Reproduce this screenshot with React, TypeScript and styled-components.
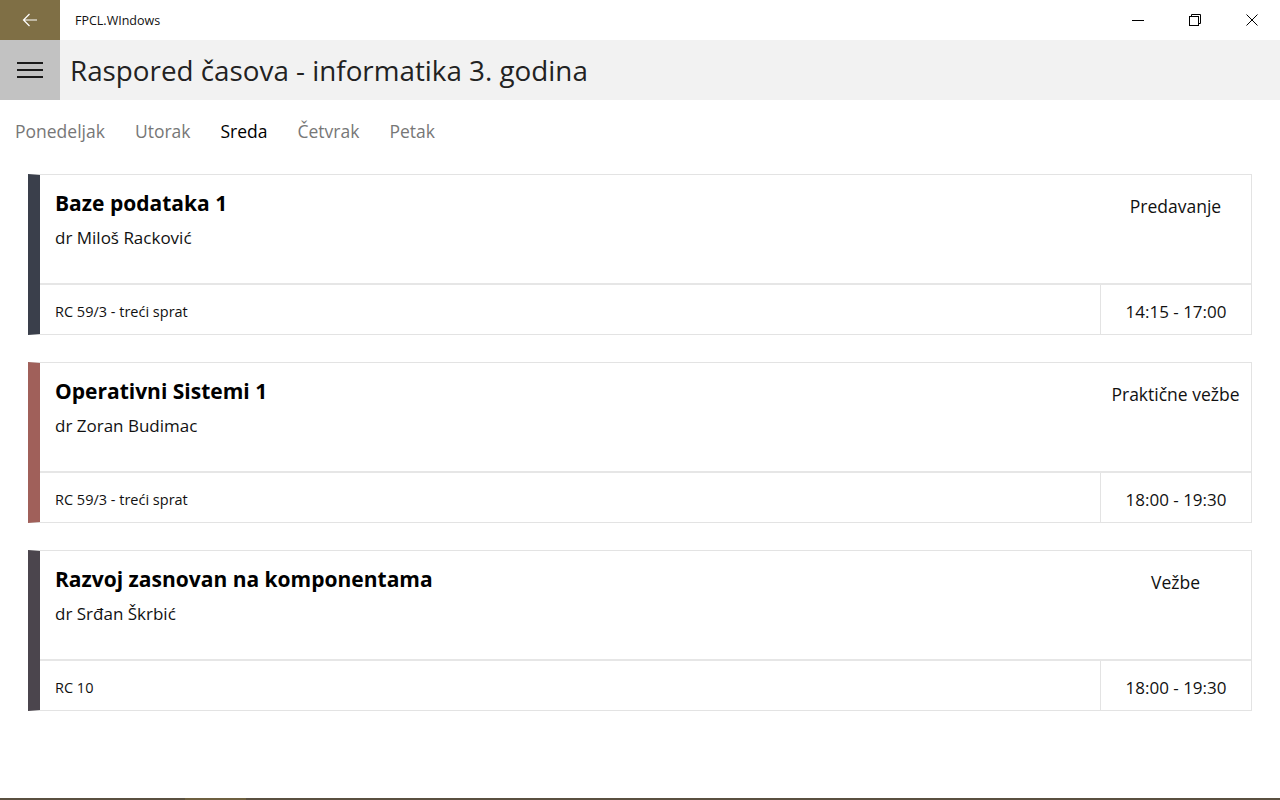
import React from 'react';
import styled, { createGlobalStyle } from 'styled-components';

const GlobalStyle = createGlobalStyle`
  html, body {
    margin: 0;
    padding: 0;
    background: #ffffff;
    font-family: "Open Sans", "Noto Sans", sans-serif;
  }
  * { box-sizing: border-box; }
`;

const Page = styled.div`
  width: 1280px;
  height: 800px;
  display: flex;
  flex-direction: column;
  background: #ffffff;
  overflow: hidden;
`;

const TitleBar = styled.div`
  height: 40px;
  display: flex;
  align-items: center;
`;

const BackButton = styled.div`
  width: 60px;
  height: 40px;
  background: #7f6f45;
  display: flex;
  align-items: center;
  justify-content: center;
`;

const AppName = styled.div`
  flex: 1;
  padding-left: 15px;
  font-size: 12.5px;
  color: #111;
`;

const CaptionButton = styled.div`
  width: 57px;
  height: 40px;
  display: flex;
  align-items: center;
  justify-content: center;
`;

const Header = styled.div`
  height: 60px;
  background: #f2f2f2;
  display: flex;
  align-items: center;
`;

const MenuButton = styled.div`
  width: 60px;
  height: 60px;
  background: #c2c2c2;
  display: flex;
  align-items: center;
  justify-content: center;
`;

const PageTitle = styled.h1`
  margin: 0 0 0 10px;
  font-size: 27.8px;
  font-weight: 400;
  color: #222;
`;

const Pivot = styled.div`
  display: flex;
  gap: 30px;
  padding: 18px 15px 0;
  height: 62px;
`;

const PivotItem = styled.div<{ $active?: boolean }>`
  font-size: 17.5px;
  color: ${p => (p.$active ? '#000' : '#777')};
  line-height: 26px;
`;

const List = styled.div`
  display: flex;
  flex-direction: column;
  gap: 27px;
  padding: 12px 28px 0;
`;

const Card = styled.div<{ $accent: string }>`
  display: flex;
  height: 161px;
  border: 1px solid #e3e3e3;
  border-left: 12px solid ${p => p.$accent};
`;

const CardBody = styled.div`
  flex: 1;
  display: flex;
  flex-direction: column;
`;

const Top = styled.div`
  height: 110px;
  display: flex;
  border-bottom: 2px solid #e6e6e6;
`;

const Info = styled.div`
  flex: 1;
  padding: 13px 0 0 15px;
`;

const Subject = styled.div`
  font-size: 21px;
  font-weight: 700;
  color: #000;
  line-height: 30px;
`;

const Lecturer = styled.div`
  font-size: 17px;
  color: #111;
  margin-top: 8px;
`;

const Kind = styled.div`
  width: 151px;
  text-align: center;
  padding-top: 19px;
  font-size: 17.5px;
  color: #111;
`;

const Bottom = styled.div`
  flex: 1;
  display: flex;
  align-items: center;
`;

const Room = styled.div`
  flex: 1;
  padding: 3px 0 0 15px;
  font-size: 14.5px;
  color: #111;
`;

const Time = styled.div`
  width: 151px;
  height: 100%;
  padding-top: 3px;
  border-left: 1px solid #e3e3e3;
  display: flex;
  align-items: center;
  justify-content: center;
  font-size: 17px;
  color: #111;
`;

const Spacer = styled.div`
  flex: 1;
`;

const Taskbar = styled.div`
  height: 2px;
  background: linear-gradient(to right, #5a5040 0 185px, #6e6040 185px 246px, #5a5040 246px);
`;

const classes = [
  {
    accent: '#3a3f4b',
    subject: 'Baze podataka 1',
    lecturer: 'dr Miloš Racković',
    kind: 'Predavanje',
    room: 'RC 59/3 - treći sprat',
    time: '14:15 - 17:00',
  },
  {
    accent: '#a0605a',
    subject: 'Operativni Sistemi 1',
    lecturer: 'dr Zoran Budimac',
    kind: 'Praktične vežbe',
    room: 'RC 59/3 - treći sprat',
    time: '18:00 - 19:30',
  },
  {
    accent: '#4b454d',
    subject: 'Razvoj zasnovan na komponentama',
    lecturer: 'dr Srđan Škrbić',
    kind: 'Vežbe',
    room: 'RC 10',
    time: '18:00 - 19:30',
  },
];

const days = ['Ponedeljak', 'Utorak', 'Sreda', 'Četvrak', 'Petak'];

const App: React.FC = () => (
  <Page>
    <GlobalStyle />
    <TitleBar>
      <BackButton>
        <svg width="16" height="14" viewBox="0 0 16 14" fill="none" stroke="#fff" strokeWidth="1.2">
          <path d="M15 7H1.5M7.5 1L1.5 7l6 6" />
        </svg>
      </BackButton>
      <AppName>FPCL.WIndows</AppName>
      <CaptionButton>
        <svg width="12" height="12" viewBox="0 0 12 12" stroke="#000" strokeWidth="1">
          <path d="M0 6.5h12" />
        </svg>
      </CaptionButton>
      <CaptionButton>
        <svg width="12" height="12" viewBox="0 0 12 12" fill="none" stroke="#000" strokeWidth="1">
          <rect x="0.5" y="2.5" width="9" height="9" />
          <path d="M2.5 2.5V0.5h9v9h-2" />
        </svg>
      </CaptionButton>
      <CaptionButton>
        <svg width="12" height="12" viewBox="0 0 12 12" stroke="#000" strokeWidth="1">
          <path d="M0.5 0.5l11 11M11.5 0.5l-11 11" />
        </svg>
      </CaptionButton>
    </TitleBar>
    <Header>
      <MenuButton>
        <svg width="26" height="18" viewBox="0 0 26 18" stroke="#1a1a1a" strokeWidth="2">
          <path d="M0 2h26M0 9h26M0 16h26" />
        </svg>
      </MenuButton>
      <PageTitle>Raspored časova - informatika 3. godina</PageTitle>
    </Header>
    <Pivot>
      {days.map(d => (
        <PivotItem key={d} $active={d === 'Sreda'}>
          {d}
        </PivotItem>
      ))}
    </Pivot>
    <List>
      {classes.map((c, i) => (
        <Card key={i} $accent={c.accent}>
          <CardBody>
            <Top>
              <Info>
                <Subject>{c.subject}</Subject>
                <Lecturer>{c.lecturer}</Lecturer>
              </Info>
              <Kind>{c.kind}</Kind>
            </Top>
            <Bottom>
              <Room>{c.room}</Room>
              <Time>{c.time}</Time>
            </Bottom>
          </CardBody>
        </Card>
      ))}
    </List>
    <Spacer />
    <Taskbar />
  </Page>
);

export default App;
